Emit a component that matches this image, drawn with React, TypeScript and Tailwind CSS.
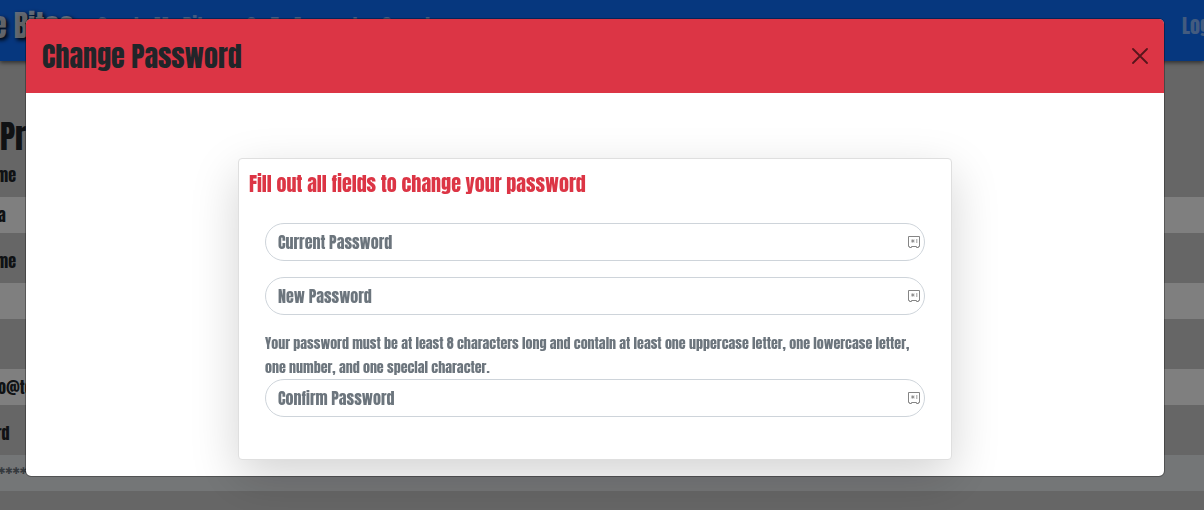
import React from "react";

function SafeIcon() {
  return (
    <svg viewBox="0 0 14 14" className="h-3.5 w-3.5" fill="none" stroke="#858585" strokeWidth="1" aria-hidden="true">
      <path d="M1.5 1.5h11v10h-1v1h-2v-1h-5v1h-2v-1h-1z" strokeLinejoin="round" />
      <path d="M4 6h3.6M5.8 4.2v3.6M4.5 4.7l2.6 2.6M7.1 4.7L4.5 7.3M9.8 4v4" strokeWidth=".8" />
    </svg>
  );
}

function PasswordField({ id, label }: { id: string; label: string }) {
  return (
    <div className="relative">
      <input
        id={id}
        type="password"
        aria-label={label}
        placeholder={label}
        className="block h-[38px] w-full rounded-full border border-[#ced4da] bg-white px-3 text-base leading-6 text-[#212529] placeholder:text-[#6c757d] placeholder:opacity-100"
      />
      <span className="absolute inset-y-0 right-1 flex items-center">
        <SafeIcon />
      </span>
    </div>
  );
}

function Row({ label, value, disabled }: { label: string; value: string; disabled?: boolean }) {
  return (
    <div className="flex flex-col gap-2 pb-3.5">
      <div className="flex h-7 items-center">{label}</div>
      <div className={disabled ? "flex h-9 items-center bg-[#e9ecef] pl-0.5 text-[#6c757d]" : "flex h-9 items-center bg-white pl-0.5"}>
        {value}
      </div>
    </div>
  );
}

export default function App() {
  return (
    <div className="relative h-screen overflow-hidden bg-[#cccccc] font-['Anton','Oswald',sans-serif] font-normal text-[#212529]">
      <nav className="flex h-[61px] items-start bg-[#0d6efd] pt-2 text-xl whitespace-nowrap text-white/50 shadow-[0_2px_4px_rgba(0,0,0,0.5)]">
        <a href="#" className="-ml-2 text-[30px] leading-9 text-white/75 [text-shadow:2px_2px_4px_#000]">e Bites</a>
        <div className="flex grow gap-6 pt-1 pl-6">
          <a href="#">Create My Bites</a>
          <a href="#">Go To Account</a>
          <a href="#">Saved</a>
        </div>
        <a href="#" className="-mr-8 pt-1">Logout</a>
      </nav>
      <main className="-ml-1 pt-14 text-base">
        <h1 className="pl-1 text-[32px] leading-10">Pr</h1>
        <div className="pt-1">
          <Row label="me" value="a" />
          <Row label="me" value="" />
          <Row label="" value="o@to" />
          <Row label="rd" value="******" disabled />
        </div>
      </main>

      <div className="fixed inset-0 overflow-hidden bg-black/50 pt-[19px] pr-10 pl-[26px]">
        <section role="dialog" aria-modal="true" aria-labelledby="title" className="rounded-[5px] bg-white outline outline-black/30">
          <header className="flex h-[74px] items-center justify-between rounded-t-[5px] bg-[#dc3545] px-4">
            <h2 id="title" className="text-[28px] leading-9">Change Password</h2>
            <button type="button" aria-label="Close" className="text-black/60">
              <svg viewBox="0 0 16 16" className="h-4 w-4" stroke="currentColor" strokeWidth="1.8" strokeLinecap="round">
                <path d="M1 1l14 14M15 1L1 15" />
              </svg>
            </button>
          </header>
          <div className="px-4 pt-[65px] pb-4">
            <form className="mx-auto max-w-[714px] rounded border border-[#dfdfdf] bg-white px-2.5 pt-2.5 pb-[42px] shadow-[0_16px_48px_rgba(0,0,0,0.175)]">
              <h3 className="text-xl leading-[30px] text-[#dc3545]">Fill out all fields to change your password</h3>
              <div className="px-4 pt-6">
                <PasswordField id="current" label="Current Password" />
                <div className="pt-4">
                  <PasswordField id="new" label="New Password" />
                </div>
                <p className="-mb-px pt-[17px] text-sm leading-6 text-[#6c757d]">
                  Your password must be at least 8 characters long and contain at least one uppercase letter, one lowercase letter, one number, and one special character.
                </p>
                <PasswordField id="confirm" label="Confirm Password" />
              </div>
            </form>
          </div>
        </section>
      </div>
    </div>
  );
}
